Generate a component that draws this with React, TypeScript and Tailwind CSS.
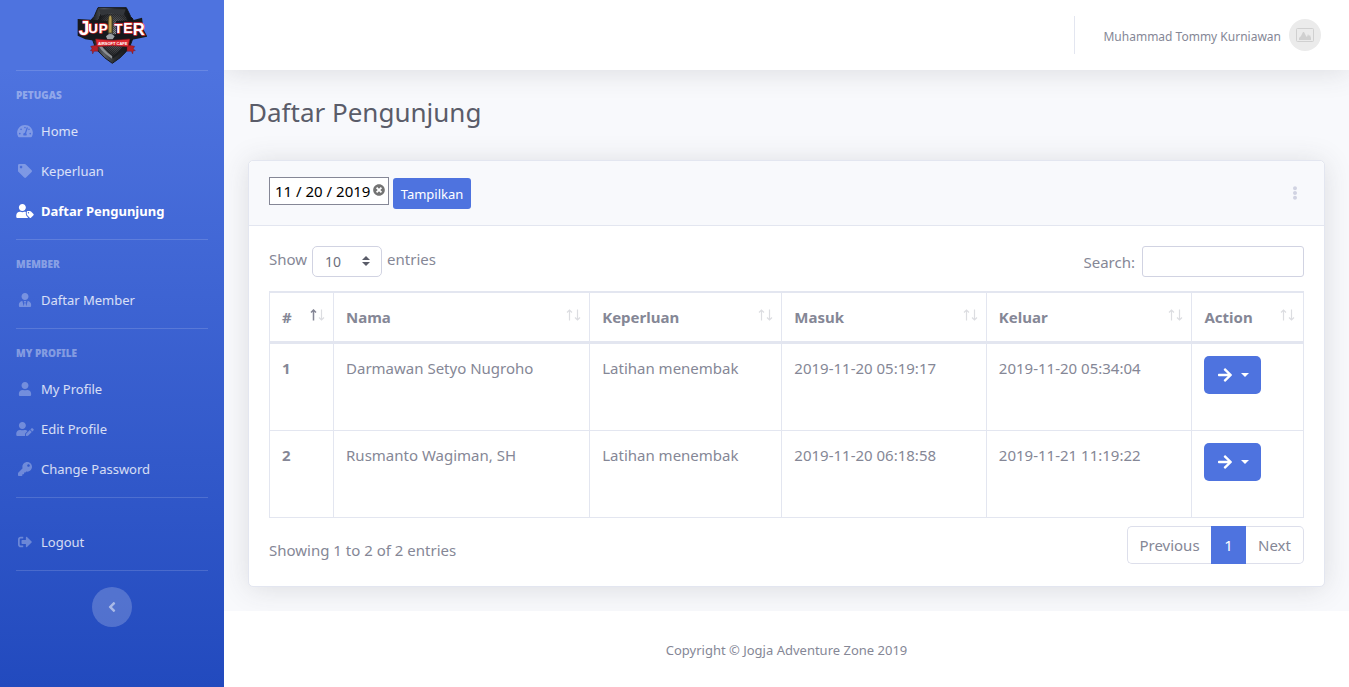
import React, { useState } from "react";
import type { IconType } from "react-icons";
import {
  FaAngleLeft,
  FaArrowRight,
  FaEllipsisV,
  FaKey,
  FaSignOutAlt,
  FaTachometerAlt,
  FaTag,
  FaTimesCircle,
  FaUser,
  FaUserEdit,
  FaUserTag,
  FaUserTie,
} from "react-icons/fa";

type NavEntry = { label: string; icon: IconType; active?: boolean };
type NavGroup = { title?: string; items: NavEntry[] };

const groups: NavGroup[] = [
  {
    title: "Petugas",
    items: [
      { label: "Home", icon: FaTachometerAlt },
      { label: "Keperluan", icon: FaTag },
      { label: "Daftar Pengunjung", icon: FaUserTag, active: true },
    ],
  },
  { title: "Member", items: [{ label: "Daftar Member", icon: FaUserTie }] },
  {
    title: "My Profile",
    items: [
      { label: "My Profile", icon: FaUser },
      { label: "Edit Profile", icon: FaUserEdit },
      { label: "Change Password", icon: FaKey },
    ],
  },
  { items: [{ label: "Logout", icon: FaSignOutAlt }] },
];

const columns = [
  { label: "#", width: "w-[6.2%]" },
  { label: "Nama", width: "w-[24.8%]" },
  { label: "Keperluan", width: "w-[18.6%]" },
  { label: "Masuk", width: "w-[19.8%]" },
  { label: "Keluar", width: "w-[19.9%]" },
  { label: "Action", width: "w-[10.7%]" },
];

const visitors = [
  {
    name: "Darmawan Setyo Nugroho",
    purpose: "Latihan menembak",
    checkIn: "2019-11-20 05:19:17",
    checkOut: "2019-11-20 05:34:04",
  },
  {
    name: "Rusmanto Wagiman, SH",
    purpose: "Latihan menembak",
    checkIn: "2019-11-20 06:18:58",
    checkOut: "2019-11-21 11:19:22",
  },
];

function Logo() {
  return (
    <svg viewBox="51 20 210 171" className="h-[57px] w-[70px]" role="img" aria-label="Jupiter">
      <defs>
        <linearGradient id="steel" x1="0" x2="1" y1="0" y2="0">
          <stop offset="0" stopColor="#15171b" />
          <stop offset="0.3" stopColor="#5a5e64" />
          <stop offset="0.55" stopColor="#2a2d31" />
          <stop offset="1" stopColor="#0d0e11" />
        </linearGradient>
        <linearGradient id="brass" x1="0" x2="1" y1="0" y2="0">
          <stop offset="0" stopColor="#5d4b1d" />
          <stop offset="0.45" stopColor="#c9b164" />
          <stop offset="1" stopColor="#4d3e18" />
        </linearGradient>
        <pattern id="mesh" width="6" height="6" patternUnits="userSpaceOnUse">
          <rect width="6" height="6" fill="#131417" />
          <rect width="3" height="3" fill="#c9cbcf" />
          <rect x="3" y="3" width="3" height="3" fill="#c9cbcf" />
        </pattern>
        <radialGradient id="shade" cx="0.6" cy="0.45" r="0.6">
          <stop offset="0" stopColor="#101114" stopOpacity="0" />
          <stop offset="1" stopColor="#101114" stopOpacity="0.9" />
        </radialGradient>
      </defs>
      <path d="M114 22H199L207 38Q211 51 219 56L218 116Q208 157 157 189Q106 157 97 116L95 56Q104 51 107 38Z" fill="url(#steel)" stroke="#17191d" strokeWidth="3" />
      <path d="M121 40H191Q196 52 203 61V113Q193 146 157 169Q121 146 112 113V61Q117 52 121 40Z" fill="url(#mesh)" />
      <path d="M121 40H191Q196 52 203 61V113Q193 146 157 169Q121 146 112 113V61Q117 52 121 40Z" fill="url(#shade)" />
      <path d="M116 27H197L190 46L157 37L124 46Z" fill="#33363b" />
      <path d="M106 117Q116 150 157 176L157 168Q128 147 119 125Z" fill="#8a8e94" />
      <path d="M209 117Q198 150 157 176L157 168Q186 147 195 125Z" fill="#1b1d20" />
      <path d="M53 56L92 58L112 60L144 62V102H168V62L218 60L246 52L251 88L262 109L239 114L202 121H104L76 117L53 106Z" fill="#17181c" />
      <path d="M144 98V60Q144 48 151 44Q158 48 158 60V98Z" fill="url(#brass)" stroke="#343026" strokeWidth="2" />
      <path d="M138 108Q151 92 164 108L158 117H142Z" fill="#9da1a6" />
      <g
        fontFamily="'Liberation Sans Narrow', 'Liberation Sans', sans-serif"
        fontWeight="700"
        fill="#ffffff"
        stroke="#d9323a"
        strokeWidth="4"
        strokeLinejoin="round"
        paintOrder="stroke"
      >
        <text x="56" y="104" fontSize="58">J</text>
        <text x="85" y="97" fontSize="40">U</text>
        <text x="116" y="97" fontSize="40">P</text>
        <text x="163" y="97" fontSize="40">T</text>
        <text x="190" y="98" fontSize="42">E</text>
        <text x="218" y="104" fontSize="50">R</text>
      </g>
      <path d="M92 138L114 133L114 153L102 153L98 161L96 151L91 151L96 145Z" fill="#b3202a" stroke="#651016" strokeWidth="1" />
      <path d="M224 138L201 133L201 153L214 153L218 161L220 151L226 151L220 145Z" fill="#b3202a" stroke="#651016" strokeWidth="1" />
      <path d="M107 116Q158 124 209 116L205 139Q158 133 111 139Z" fill="#dd2932" stroke="#8d171e" strokeWidth="2" />
      <text x="158" y="133" textAnchor="middle" fontFamily="Liberation Sans, sans-serif" fontWeight="700" fontSize="12" fill="#ffffff">
        AIRSOFT CAFE
      </text>
    </svg>
  );
}

function Sidebar() {
  return (
    <aside className="relative z-10 w-56 shrink-0 bg-[linear-gradient(180deg,#4e73df_10%,#224abe_100%)] text-white">
      <a href="#home" className="flex h-[70px] items-center justify-center">
        <Logo />
      </a>
      <hr className="mx-4 border-white/15" />
      <nav>
        {groups.map((group) => (
          <div key={group.items[0].label} className={group.title ? "" : "pt-6"}>
            {group.title && (
              <h2 className="px-4 pt-4 pb-2 text-[10px] leading-4 font-black text-white/40 uppercase">
                {group.title}
              </h2>
            )}
            <ul>
              {group.items.map(({ label, icon: Icon, active }) => (
                <li key={label}>
                  <a
                    href="#"
                    aria-current={active ? "page" : undefined}
                    className={
                      active
                        ? "flex h-10 items-center gap-[7px] px-4 text-[13px] font-bold text-white"
                        : "flex h-10 items-center gap-[7px] px-4 text-[13px] text-white/80"
                    }
                  >
                    <Icon className={active ? "h-[14px] w-[18px] shrink-0" : "h-[14px] w-[18px] shrink-0 text-white/30"} />
                    {label}
                  </a>
                </li>
              ))}
            </ul>
            <hr className="mx-4 mt-2 border-white/15" />
          </div>
        ))}
      </nav>
      <div className="mt-4 flex justify-center">
        <button
          type="button"
          aria-label="Collapse sidebar"
          className="flex size-10 items-center justify-center rounded-full bg-white/20 text-white/50"
        >
          <FaAngleLeft className="size-4" />
        </button>
      </div>
    </aside>
  );
}

function Topbar() {
  return (
    <header className="relative flex h-[70px] items-center justify-end bg-white pr-7 shadow-[0_2px_28px_0_rgba(58,59,69,0.15)]">
      <div className="mr-7 h-[38px] w-px bg-[#e3e6f0]" />
      <a href="#profile" className="flex items-center gap-2 text-[12px]">
        <span className="pt-[3px]">Muhammad Tommy Kurniawan</span>
        <span className="flex size-8 items-center justify-center rounded-full bg-[#ebebeb]">
          <svg viewBox="0 0 18 14" className="h-[14px] w-[18px]" aria-hidden="true">
            <rect x="0.5" y="0.5" width="17" height="13" rx="1" fill="none" stroke="#d0d0d0" />
            <path d="M3 12V10L5 8L7 4H8L10 8L11 9L12 6L13 8L14 7L15 10V12Z" fill="#d0d0d0" />
          </svg>
        </span>
      </a>
    </header>
  );
}

function SortArrows({ ascending }: { ascending: boolean }) {
  return (
    <svg viewBox="0 0 15 12" className="mb-1 h-3 w-[15px] shrink-0" fill="none" aria-hidden="true">
      <path d="M3.5 11.5V1.5M1 3.5L3.5 1L6 3.5" stroke={ascending ? "#858796" : "#dcdde1"} strokeWidth={ascending ? 1.5 : 1.2} />
      <path d="M11.5 0.5V10.5M9 8.5L11.5 11L14 8.5" stroke="#dcdde1" strokeWidth={1.2} />
    </svg>
  );
}

function VisitorTable() {
  const cell = "border-t border-r border-[#e3e6f0] p-3 align-top last:border-r-0";
  return (
    <table className="w-full table-fixed border-separate border-spacing-0 border border-[#e3e6f0] text-left">
      <thead>
        <tr>
          {columns.map(({ label, width }, index) => (
            <th
              key={label}
              scope="col"
              aria-sort={index === 0 ? "ascending" : undefined}
              className={`${width} border-t border-r border-b-2 border-[#e3e6f0] py-3 pr-2 pl-3 font-bold last:border-r-0`}
            >
              <div className="flex items-center justify-between">
                {label}
                <SortArrows ascending={index === 0} />
              </div>
            </th>
          ))}
        </tr>
      </thead>
      <tbody>
        {visitors.map((visitor, index) => (
          <tr key={visitor.name} className="h-[87px]">
            <th scope="row" className={`${cell} font-bold`}>
              {index + 1}
            </th>
            <td className={cell}>{visitor.name}</td>
            <td className={cell}>{visitor.purpose}</td>
            <td className={cell}>{visitor.checkIn}</td>
            <td className={cell}>{visitor.checkOut}</td>
            <td className={cell}>
              <button
                type="button"
                aria-label={`Actions for ${visitor.name}`}
                className="flex h-[38px] w-[57px] items-center justify-center gap-2 rounded-[5px] bg-[#4e73df] text-white"
              >
                <FaArrowRight className="size-4" />
                <svg viewBox="0 0 8 4" className="h-1 w-2" aria-hidden="true">
                  <path d="M0 0H8L4 4Z" fill="currentColor" />
                </svg>
              </button>
            </td>
          </tr>
        ))}
      </tbody>
    </table>
  );
}

function VisitorCard() {
  const [date, setDate] = useState("11 / 20 / 2019");
  const [search, setSearch] = useState("");
  return (
    <section className="rounded-[5px] border border-[#e3e6f0] bg-white shadow-[0_2px_28px_0_rgba(58,59,69,0.15)]">
      <div className="flex items-center justify-between rounded-t-[5px] border-b border-[#e3e6f0] bg-[#f8f9fc] px-5 py-4">
        <form className="flex items-start gap-1" onSubmit={(event) => event.preventDefault()}>
          <div className="flex h-7 w-[120px] items-center justify-between border border-[#858796] bg-white pr-[3px] pl-[5px]">
            <input
              aria-label="Tanggal"
              value={date}
              onChange={(event) => setDate(event.target.value)}
              className="w-24 text-[15px] text-black outline-none"
            />
            <button type="button" aria-label="Clear date" onClick={() => setDate("")} className="pb-[2px] text-[#737373]">
              <FaTimesCircle className="size-3" />
            </button>
          </div>
          <button type="submit" className="mt-px h-[31px] w-[78px] rounded-[3px] bg-[#4e73df] text-[13px] text-white">
            Tampilkan
          </button>
        </form>
        <button type="button" aria-label="More options" className="w-[18px] text-[#d1d3e2]">
          <FaEllipsisV className="mx-auto size-[14px]" />
        </button>
      </div>
      <div className="px-5 pt-5 pb-[22px]">
        <div className="mb-[14px] flex items-start justify-between">
          <label className="flex items-start gap-[5px] leading-[27px]">
            Show
            <span className="relative">
              <select
                defaultValue="10"
                className="block h-[31px] w-[70px] appearance-none rounded-[5px] border border-[#d1d3e2] bg-white pl-3 text-[14px] text-[#6e707e]"
              >
                <option>10</option>
                <option>25</option>
                <option>50</option>
                <option>100</option>
              </select>
              <svg viewBox="0 0 8 10" className="pointer-events-none absolute top-[10px] right-3 h-[10px] w-2" aria-hidden="true">
                <path d="M4 0L8 4H0ZM0 6H8L4 10Z" fill="#5a5c69" />
              </svg>
            </span>
            entries
          </label>
          <label className="flex items-center gap-[7px]">
            Search:
            <input
              type="search"
              value={search}
              onChange={(event) => setSearch(event.target.value)}
              className="h-[31px] w-[162px] rounded-[3px] border border-[#d1d3e2] bg-white px-2 text-[14px]"
            />
          </label>
        </div>
        <VisitorTable />
        <div className="mt-2 flex items-start justify-between">
          <p className="pt-3">Showing 1 to 2 of 2 entries</p>
          <ul className="flex h-[38px] text-center leading-9">
            <li className="w-[84px] rounded-l-[5px] border border-r-0 border-[#dddfeb]">
              <a href="#" className="block">Previous</a>
            </li>
            <li className="w-[35px] border border-[#4e73df] bg-[#4e73df] text-white">
              <a href="#" aria-current="page" className="block">1</a>
            </li>
            <li className="w-[58px] rounded-r-[5px] border border-l-0 border-[#dddfeb]">
              <a href="#" className="block">Next</a>
            </li>
          </ul>
        </div>
      </div>
    </section>
  );
}

export default function App() {
  return (
    <div className="flex min-h-screen bg-[#f8f9fc] font-['Noto_Sans','Open_Sans',sans-serif] text-[15px] leading-6 text-[#858796]">
      <Sidebar />
      <div className="flex min-w-0 flex-1 flex-col">
        <Topbar />
        <main className="flex-1 px-6 pt-6 pb-6">
          <h1 className="mb-[30px] text-[26px] leading-9 text-[#5a5c69]">Daftar Pengunjung</h1>
          <VisitorCard />
        </main>
        <footer className="relative flex h-[76px] items-center justify-center bg-white pt-[2px] text-[13px]">
          Copyright © Jogja Adventure Zone 2019
        </footer>
      </div>
    </div>
  );
}
